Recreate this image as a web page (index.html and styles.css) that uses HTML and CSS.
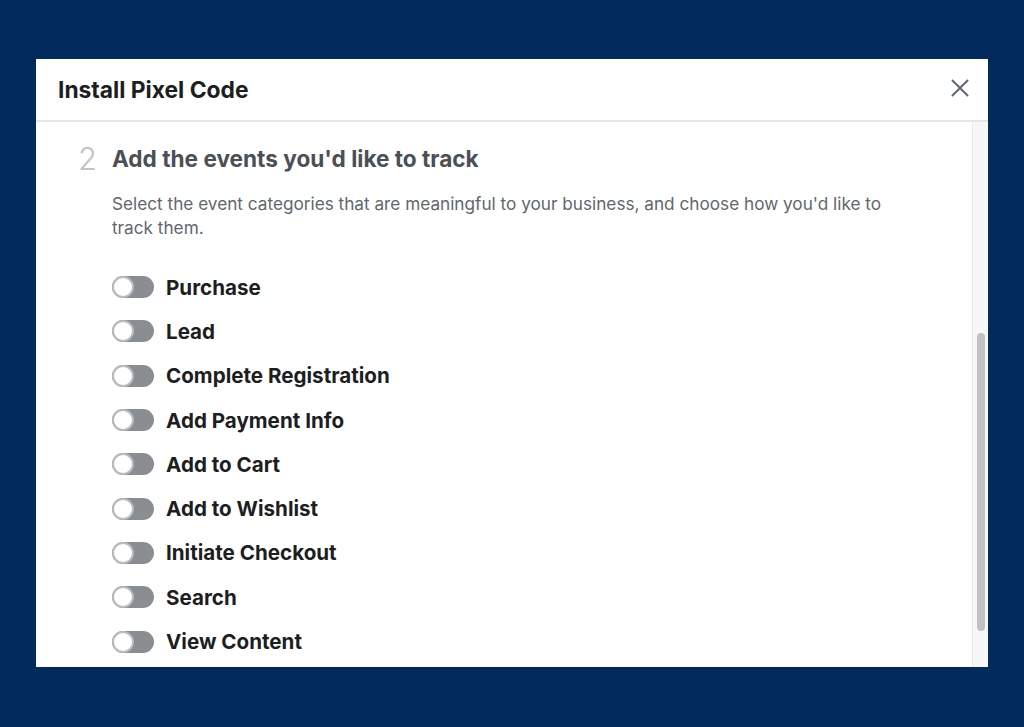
FILE: index.html
```html
<!DOCTYPE html>
<html>
<head>
    <title>Install Pixel Code</title>
    <meta name="viewport" content="width=device-width, initial-scale=1">
    <link rel="stylesheet" href="styles.css">
</head>
<body>
    <div class="modal">
        <div class="modal-header">
            <h2>Install Pixel Code</h2>
            <svg class="close" width="20" height="20" viewBox="0 0 20 20">
                <path d="M2 2 L18 18 M18 2 L2 18" stroke="#606770" stroke-width="2" fill="none"/>
            </svg>
        </div>
        <div class="modal-body">
            <div class="content">
                <div class="step">
                    <span class="step-num">2</span>
                    <div class="step-main">
                        <h3>Add the events you'd like to track</h3>
                        <p class="desc">Select the event categories that are meaningful to your business, and choose how you'd like to track them.</p>
                        <ul class="events">
                            <li><span class="toggle"></span>Purchase</li>
                            <li><span class="toggle"></span>Lead</li>
                            <li><span class="toggle"></span>Complete Registration</li>
                            <li><span class="toggle"></span>Add Payment Info</li>
                            <li><span class="toggle"></span>Add to Cart</li>
                            <li><span class="toggle"></span>Add to Wishlist</li>
                            <li><span class="toggle"></span>Initiate Checkout</li>
                            <li><span class="toggle"></span>Search</li>
                            <li><span class="toggle"></span>View Content</li>
                        </ul>
                    </div>
                </div>
            </div>
            <div class="scrollbar">
                <div class="thumb"></div>
            </div>
        </div>
    </div>
</body>
</html>
```

FILE: styles.css
```css
body {
    margin: 0;
    padding: 0;
    background-color: #032a5c;
    font-family: Inter, "Liberation Sans", Arial, sans-serif;
    height: 727px;
    overflow: hidden;
}

.modal {
    width: 952px;
    height: 608px;
    margin: 59px 0 0 36px;
    background-color: #fff;
    display: flex;
    flex-direction: column;
    overflow: hidden;
}

.modal-header {
    height: 61px;
    flex-shrink: 0;
    display: flex;
    align-items: center;
    justify-content: space-between;
    padding: 0 18px 0 22px;
    border-bottom: 2px solid #e5e6e9;
}

.modal-header h2 {
    margin: 0;
    font-size: 22.8px;
    font-weight: 700;
    color: #1c1e21;
}

.close {
    margin-top: -4px;
}

.modal-body {
    flex: 1;
    display: flex;
    overflow: hidden;
}

.content {
    flex: 1;
}

.step {
    display: flex;
    padding: 20px 0 0 42px;
}

.step-num {
    width: 34px;
    font-size: 31px;
    line-height: 34px;
    color: #bec3c9;
    font-weight: 300;
}

.step-main h3 {
    margin: 0;
    font-size: 22.6px;
    line-height: 34px;
    color: #4b4f56;
    font-weight: 700;
}

.desc {
    margin: 16px 0 0;
    width: 785px;
    font-size: 17.2px;
    line-height: 24px;
    color: #606770;
}

.events {
    list-style: none;
    margin: 25px 0 0;
    padding: 0;
}

.events li {
    display: flex;
    align-items: center;
    height: 44.3px;
    font-size: 20.6px;
    font-weight: 700;
    color: #1c1e21;
}

.toggle {
    position: relative;
    width: 42px;
    height: 22px;
    border-radius: 11px;
    background-color: #8a8d91;
    margin-right: 12px;
}

.toggle::before {
    content: "";
    position: absolute;
    left: 0;
    top: 0;
    width: 18px;
    height: 18px;
    border-radius: 50%;
    background-color: #fff;
    border: 2px solid #b8bbbf;
}

.scrollbar {
    width: 15px;
    background-color: #f7f7f7;
    border-left: 1px solid #ebebeb;
    padding-top: 211px;
}

.thumb {
    width: 8px;
    height: 298px;
    margin-left: 4px;
    border-radius: 4px;
    background-color: #c1c1c1;
}
```
